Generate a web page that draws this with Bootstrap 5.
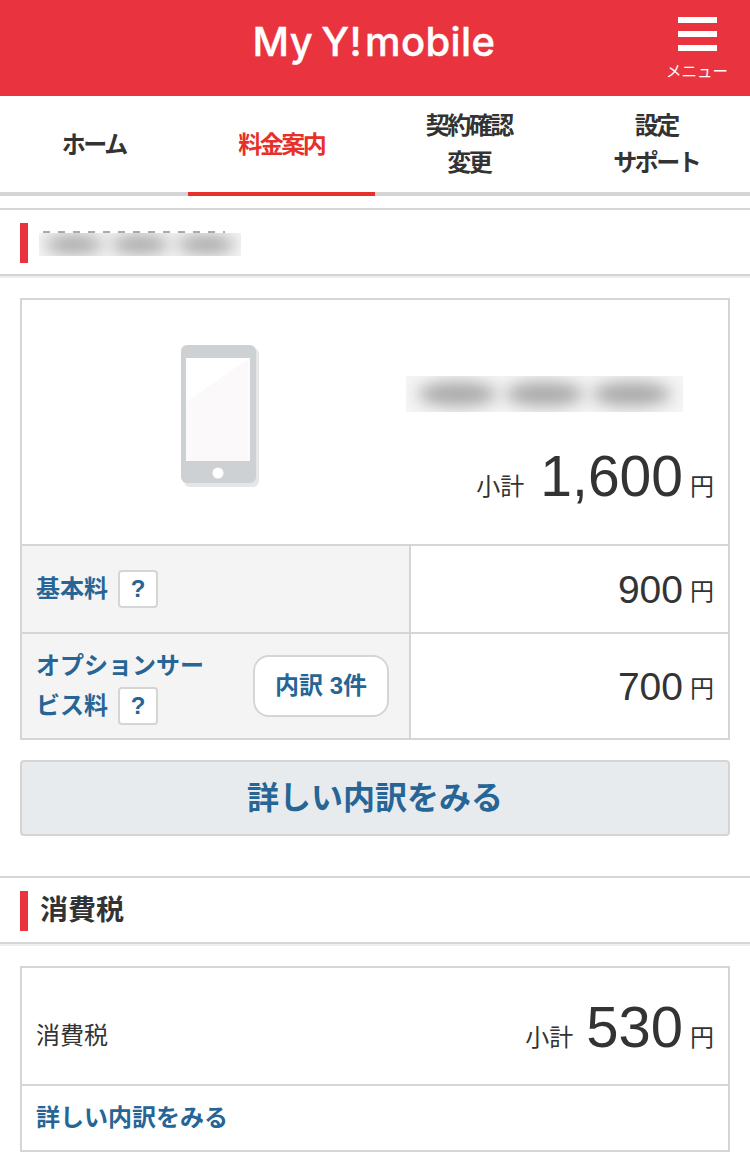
<!DOCTYPE html>
<html lang="ja">
<head>
    <meta charset="UTF-8">
    <meta name="viewport" content="width=device-width, initial-scale=1.0">
    <title>My Y!mobile</title>
    <link href="https://cdn.jsdelivr.net/npm/bootstrap@5.3.0/dist/css/bootstrap.min.css" rel="stylesheet">
    <style>
        body { font-family: "Liberation Sans", "Noto Sans CJK JP", sans-serif; color: #333; background: #fff; font-size: 24px; width: 750px; height: 1160px; overflow: hidden; }
        .top-bar { height: 96px; background: #e9343f; color: #fff; }
        .logo-text { font-family: Inter, sans-serif; font-size: 40px; font-weight: 500; line-height: 1; letter-spacing: .4px; word-spacing: -3px; margin: 0 2px 13px 0; white-space: nowrap; -webkit-text-stroke: .4px #fff; }
        .logo-text span { margin-left: 3px; }
        .menu-btn { right: 23px; top: 17px; width: 60px; }
        .menu-btn i { display: block; width: 39px; height: 6px; background: #fff; margin: 0 auto 8px; }
        .menu-btn span { display: block; font-size: 15.5px; line-height: 1; margin-top: 13px; margin-left: -1px; white-space: nowrap; text-align: center; }
        .tab-row { height: 100px; border-bottom: 4px solid #d5d5d5; }
        .tab-row .nav-item { flex: 0 0 25%; }
        .tab-row .nav-link { height: 100px; margin-bottom: -4px; padding: 0; color: #333; font-weight: 700; font-size: 24px; line-height: 37px; letter-spacing: -2.5px; border-bottom: 4px solid transparent; border-radius: 0; }
        .tab-row .nav-link.active { color: #e8302a; border-bottom-color: #e8302a; }
        .sec-head { height: 68px; margin-top: 12px; border-top: 2px solid #d5d5d5; border-bottom: 2px solid #d5d5d5; box-shadow: 0 2px 0 #eee; padding: 2px 0 0 20px; }
        .sec-bar { width: 8px; height: 40px; background: #e9343f; }
        .sec-title { font-size: 28px; font-weight: 700; margin-left: 12px; line-height: 40px; }
        .sec-one { margin-bottom: 22px; }
        .blur-box { overflow: hidden; background: #f5f5f5; }
        .blur-box b { display: block; background: #a8a8a8; filter: blur(8px); border-radius: 50%; }
        .num-wrap { margin: 1px 0 0 11px; }
        .num-peek { height: 2px; margin: 0 16px 0 4px; background: repeating-linear-gradient(90deg, #aaa 0 7px, transparent 7px 15px); }
        .blur-small { width: 202px; height: 23px; padding: 2px 6px; }
        .blur-small b { height: 19px; flex: 1; }
        .blur-wide { width: 277px; height: 36px; padding: 6px 12px; margin-right: 31px; }
        .blur-wide b { height: 24px; flex: 1; }
        .fee-card { margin: 0 20px; border: 2px solid #d5d5d5; }
        .fee-top { height: 246px; border-bottom: 2px solid #d5d5d5; }
        .fee-pic { width: 398px; padding: 45px 0 0 14px; }
        .fee-sum { padding: 76px 14px 0 0; }
        .sum-line { margin-top: 35px; }
        .big-num { font-size: 57px; line-height: 58px; margin: 0 7px 0 16px; }
        .tax-num { font-size: 58px; margin-left: 13px; }
        .mid-num { font-size: 39px; line-height: 39px; margin-right: 7px; }
        .sum-label, .yen { line-height: 32px; margin-bottom: 2px; }
        .row-yen { margin-top: 6px; line-height: 32px; }
        .fee-label { width: 389px; background: #f4f4f4; border-right: 2px solid #d5d5d5; padding-left: 14px; }
        .fee-row1 { height: 88px; border-bottom: 2px solid #d5d5d5; }
        .fee-row2 { height: 104px; }
        .fee-value { padding-right: 14px; flex: 1; }
        .link-text { color: #266595; font-weight: 700; font-size: 24px; text-decoration: none; }
        .q-box { width: 40px; height: 38px; background: #fff; border: 2px solid #d5d5d5; border-radius: 4px; font-weight: 700; color: #266595; font-size: 24px; line-height: 34px; text-align: center; margin-left: 10px; }
        .opt-text { width: 170px; line-height: 40px; }
        .opt-line { margin-top: 0; }
        .detail-pill { width: 136px; height: 62px; margin-left: 47px; background: #fff; border: 2px solid #d5d5d5; border-radius: 16px; color: #266595; font-weight: 700; font-size: 24px; padding: 0; }
        .detail-btn { display: block; margin: 20px 20px 40px; width: 710px; height: 76px; background: #e8ebee; border: 2px solid #d5d5d5; border-radius: 4px; color: #266595; font-size: 32px; font-weight: 700; padding: 0; }
        .sec-two { margin-bottom: 22px; }
        .tax-top { height: 118px; border-bottom: 2px solid #d5d5d5; padding: 20px 14px 0 14px; }
        .tax-sum { margin-bottom: 18px; }
        .tax-link { height: 64px; padding-left: 14px; }
    </style>
</head>
<body>

    <header class="top-bar position-relative d-flex align-items-center justify-content-center">
        <div class="logo-text">My Y!<span>mobile</span></div>
        <div class="menu-btn position-absolute">
            <i></i><i></i><i></i>
            <span>メニュー</span>
        </div>
    </header>

    <ul class="nav tab-row">
        <li class="nav-item d-flex"><a class="nav-link w-100 d-flex align-items-center justify-content-center" href="#">ホーム</a></li>
        <li class="nav-item d-flex"><a class="nav-link active w-100 d-flex align-items-center justify-content-center" href="#">料金案内</a></li>
        <li class="nav-item d-flex"><a class="nav-link w-100 text-center d-flex align-items-center justify-content-center" href="#"><span>契約確認<br>変更</span></a></li>
        <li class="nav-item d-flex"><a class="nav-link w-100 text-center d-flex align-items-center justify-content-center" href="#"><span>設定<br>サポート</span></a></li>
    </ul>

    <div class="sec-head sec-one d-flex align-items-center">
        <div class="sec-bar"></div>
        <div class="num-wrap">
            <div class="num-peek"></div>
            <div class="blur-box blur-small d-flex gap-2"><b></b><b></b><b></b></div>
        </div>
    </div>

    <div class="fee-card">
        <div class="fee-top d-flex">
            <div class="fee-pic d-flex justify-content-center">
                <svg width="80" height="144" viewBox="0 0 80 144">
                    <rect x="3" y="3" width="75" height="139" rx="6" fill="#e4e6e8"/>
                    <rect x="0" y="0" width="75" height="138" rx="6" fill="#cdd1d4"/>
                    <rect x="5" y="13" width="64" height="103" fill="#fbf9f9"/>
                    <path d="M5 13H69L5 57Z" fill="#fff"/>
                    <circle cx="37" cy="128" r="5.5" fill="#fff"/>
                </svg>
            </div>
            <div class="fee-sum flex-grow-1 d-flex flex-column align-items-end">
                <div class="blur-box blur-wide d-flex gap-2"><b></b><b></b><b></b></div>
                <div class="sum-line d-flex align-items-end">
                    <span class="sum-label">小計</span><span class="big-num">1,600</span><span class="yen">円</span>
                </div>
            </div>
        </div>
        <div class="fee-row1 d-flex">
            <div class="fee-label d-flex align-items-center">
                <a class="link-text" href="#">基本料</a><span class="q-box">?</span>
            </div>
            <div class="fee-value d-flex align-items-center justify-content-end">
                <span class="mid-num">900</span><span class="row-yen">円</span>
            </div>
        </div>
        <div class="fee-row2 d-flex">
            <div class="fee-label d-flex align-items-center">
                <div class="opt-text">
                    <a class="link-text" href="#">オプションサー</a>
                    <div class="d-flex align-items-center opt-line"><a class="link-text" href="#">ビス料</a><span class="q-box">?</span></div>
                </div>
                <button class="detail-pill btn">内訳 3件</button>
            </div>
            <div class="fee-value d-flex align-items-center justify-content-end">
                <span class="mid-num">700</span><span class="row-yen">円</span>
            </div>
        </div>
    </div>

    <button class="btn detail-btn">詳しい内訳をみる</button>

    <div class="sec-head sec-two d-flex align-items-center">
        <div class="sec-bar"></div>
        <div class="sec-title">消費税</div>
    </div>

    <div class="fee-card">
        <div class="tax-top d-flex justify-content-between align-items-center">
            <span>消費税</span>
            <div class="tax-sum d-flex align-items-end">
                <span class="sum-label">小計</span><span class="big-num tax-num">530</span><span class="yen">円</span>
            </div>
        </div>
        <div class="tax-link d-flex align-items-center"><a class="link-text" href="#">詳しい内訳をみる</a></div>
    </div>

    <script src="https://cdn.jsdelivr.net/npm/bootstrap@5.3.0/dist/js/bootstrap.bundle.min.js"></script>
</body>
</html>
